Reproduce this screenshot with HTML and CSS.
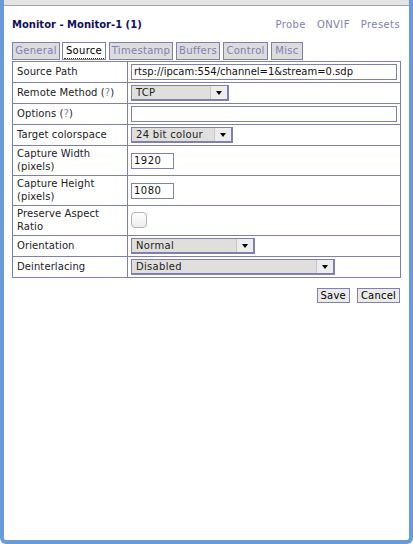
FILE: index.html
```html
<!DOCTYPE html>
<html>
<head>
<meta charset="utf-8">
<title>Monitor - Monitor-1</title>
<link rel="stylesheet" href="styles.css">
</head>
<body>
<div class="window">
  <div class="topbar"></div>
  <div class="content">
    <div class="header">
      <h2 class="title">Monitor - Monitor-1 (1)</h2>
      <nav class="links"><a>Probe</a><a>ONVIF</a><a>Presets</a></nav>
    </div>
    <ul class="tabs">
      <li class="tab t-general">General</li>
      <li class="tab t-source active"><span>Source</span></li>
      <li class="tab t-timestamp">Timestamp</li>
      <li class="tab t-buffers">Buffers</li>
      <li class="tab t-control">Control</li>
      <li class="tab t-misc">Misc</li>
    </ul>
    <table class="form">
      <colgroup><col class="c1"><col></colgroup>
      <tr><td class="lbl">Source Path</td><td><div class="input wide">rtsp://ipcam:554/channel=1&amp;stream=0.sdp</div></td></tr>
      <tr><td class="lbl">Remote Method (<a class="q">?</a>)</td><td><div class="select s1"><span class="val">TCP</span><span class="arrow"></span></div></td></tr>
      <tr><td class="lbl">Options (<a class="q">?</a>)</td><td><div class="input wide"></div></td></tr>
      <tr><td class="lbl">Target colorspace</td><td><div class="select s2"><span class="val">24 bit colour</span><span class="arrow"></span></div></td></tr>
      <tr class="tall"><td class="lbl">Capture Width<br>(pixels)</td><td><div class="input small">1920</div></td></tr>
      <tr class="tall"><td class="lbl">Capture Height<br>(pixels)</td><td><div class="input small">1080</div></td></tr>
      <tr class="tall"><td class="lbl">Preserve Aspect<br>Ratio</td><td><div class="check"></div></td></tr>
      <tr><td class="lbl">Orientation</td><td><div class="select s3"><span class="val">Normal</span><span class="arrow"></span></div></td></tr>
      <tr><td class="lbl">Deinterlacing</td><td><div class="select s4"><span class="val">Disabled</span><span class="arrow"></span></div></td></tr>
    </table>
    <div class="actions"><button class="btn">Save</button><button class="btn">Cancel</button></div>
  </div>
</div>
</body>
</html>
```
FILE: styles.css
```css
html, body {
  margin: 0;
  padding: 0;
  background: #ffffff;
}
body {
  font-family: "DejaVu Sans", Verdana, sans-serif;
  font-size: 10px;
  color: #222222;
}
.window {
  box-sizing: border-box;
  width: 413px;
  height: 544px;
  border-left: 4px solid #6b9bd7;
  border-right: 4px solid #6b9bd7;
  border-bottom: 4px solid #6b9bd7;
  border-radius: 0 0 6px 6px;
  background: #ffffff;
  overflow: hidden;
}
.topbar {
  height: 5px;
  background: #e4e4e4;
  border-bottom: 1px solid #a4a4a4;
}
.content {
  padding: 13px 8px 0 8px;
}
.header {
  display: flex;
  justify-content: space-between;
  align-items: baseline;
  line-height: 12px;
}
.title {
  margin: 0;
  font-size: 10px;
  font-weight: bold;
  color: #10105e;
}
.links {
  display: flex;
  gap: 11px;
  padding-right: 1px;
}
.links a {
  color: #7f7fb2;
  letter-spacing: 0.4px;
}
.tabs {
  list-style: none;
  margin: 11px 0 0 0;
  padding: 0;
  display: flex;
  gap: 2px;
}
.tab {
  box-sizing: border-box;
  height: 18px;
  border: 1px solid #7f7fb2;
  background: #dcdcdc;
  color: #7f7fb2;
  padding: 2px 0;
  line-height: 12px;
  text-align: center;
  letter-spacing: 0.3px;
}
.t-general { width: 48px; }
.t-source { width: 44px; }
.t-timestamp { width: 64px; }
.t-buffers { width: 44px; margin-left: 1px; }
.t-control { width: 45px; margin-left: 1px; }
.t-misc { width: 32px; margin-left: 1px; }
.t-timestamp { margin-left: 1px; }
.tab.active {
  background: #ffffff;
  color: #000000;
  padding: 2px 1px 0 1px;
}
.tab.active span {
  display: block;
  height: 13px;
  border-bottom: 1px dotted #333333;
}
.form {
  margin-top: 1px;
  width: 100%;
  border-collapse: collapse;
  table-layout: fixed;
}
.form col.c1 {
  width: 115px;
}
.form td {
  border: 1px solid #7f7fb2;
  padding: 2px 3px;
  line-height: 12.5px;
  vertical-align: middle;
  height: 16px;
}
.form td.lbl {
  padding-left: 4px;
  color: #222222;
  letter-spacing: 0.1px;
}
.q {
  color: #7f7fb2;
}
.input {
  box-sizing: border-box;
  height: 16px;
  border: 1px solid #7f7fb2;
  background: #ffffff;
  color: #111111;
  padding: 0 2px;
  line-height: 14px;
  white-space: nowrap;
  overflow: hidden;
}
.input.wide {
  width: 100%;
}
.input.small {
  width: 43px;
  letter-spacing: 0.5px;
}
.select {
  box-sizing: border-box;
  height: 16px;
  display: flex;
  align-items: center;
  justify-content: space-between;
  background: #e0dfdc;
  border: 1px solid #7f7fb2;
  border-right-width: 2px;
  border-bottom-width: 2px;
  color: #222222;
}
.select .val {
  padding-left: 4px;
  line-height: 13px;
  letter-spacing: 0.3px;
}
.select .arrow {
  width: 16px;
  height: 13px;
  background: #ededed;
  border-left: 1px solid #c8c8c8;
  display: flex;
  align-items: center;
  justify-content: center;
}
.select .arrow::after {
  content: "";
  width: 0;
  height: 0;
  border-left: 3.5px solid transparent;
  border-right: 3.5px solid transparent;
  border-top: 4px solid #000000;
}
.s1 { width: 98px; }
.s2 { width: 102px; }
.s3 { width: 124px; }
.s4 { width: 204px; }
.check {
  box-sizing: border-box;
  width: 16px;
  height: 16px;
  margin-top: -2px;
  border: 1px solid #b4b4b4;
  border-radius: 4px;
  background: linear-gradient(#ffffff, #ececec);
}
.actions {
  display: flex;
  justify-content: flex-end;
  gap: 7px;
  margin-top: 10px;
  padding-right: 1px;
}
.btn {
  box-sizing: border-box;
  height: 15px;
  font-family: "DejaVu Sans", Verdana, sans-serif;
  font-size: 10px;
  line-height: 13px;
  padding: 0 3px;
  border: 1px solid #7f7fb2;
  background: #ebebeb;
  color: #000000;
  letter-spacing: 0.2px;
}
```
